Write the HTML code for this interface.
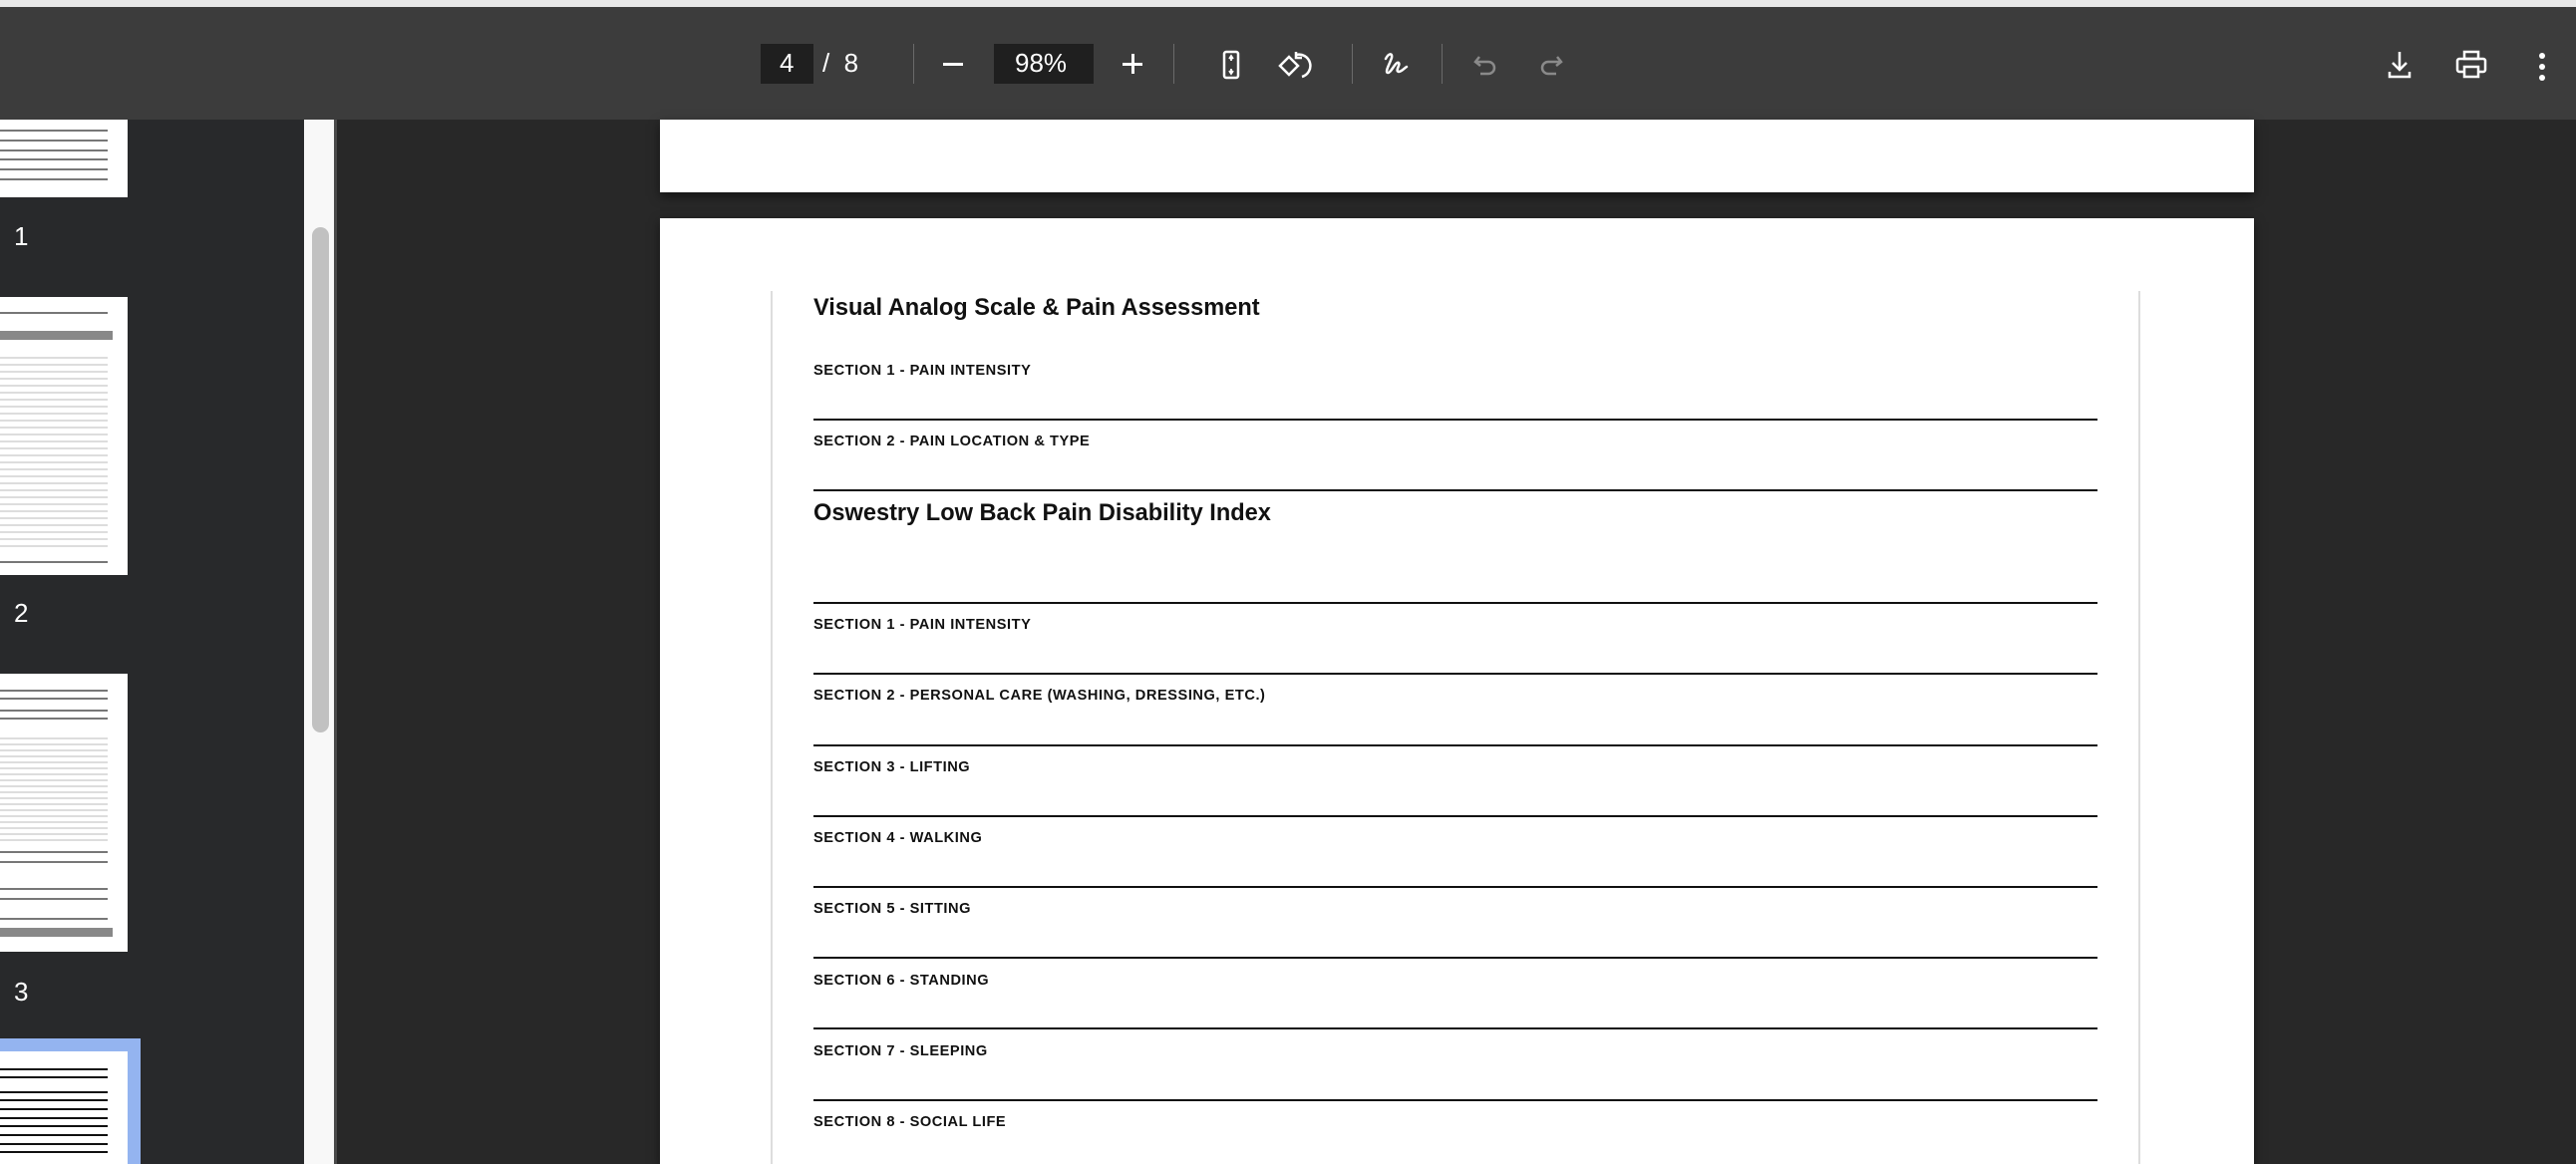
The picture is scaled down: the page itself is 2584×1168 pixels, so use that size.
<!DOCTYPE html>
<html><head><meta charset="utf-8"><style>
*{margin:0;padding:0;box-sizing:border-box}
body{width:2584px;height:1168px;overflow:hidden;background:#282828;font-family:"Liberation Sans",sans-serif;position:relative}
.abs{position:absolute}
#top{left:0;top:0;width:2584px;height:7px;background:#e8e8e8}
#tb{left:0;top:7px;width:2584px;height:113px;background:#3c3c3c}
.sep{position:absolute;top:44px;width:1px;height:40px;background:#6a6a6a}
.tbt{position:absolute;color:#fff;font-size:26px}
#side{left:0;top:120px;width:305px;height:1048px;background:#28292b;overflow:hidden}
#sb{left:305px;top:120px;width:30px;height:1048px;background:#f8f8f8}
#thumb{left:313px;top:228px;width:17px;height:507px;background:#c1c1c1;border-radius:9px}
#sl{left:335px;top:120px;width:3px;height:1048px;background:#4a4a4a}
.pg{position:absolute;background:#fff;left:662px;width:1599px;box-shadow:0 4px 10px rgba(0,0,0,.5)}
.vl{position:absolute;width:2px;background:#ddd}
.h{position:absolute;left:816px;font-size:23.6px;font-weight:bold;color:#111}
.s{position:absolute;left:816px;font-size:14.6px;font-weight:bold;color:#111;letter-spacing:.55px}
.ln{position:absolute;left:816px;width:1288px;height:2px;background:#111}
.tp{position:absolute;left:0;width:128px;background:#fff}
.tl{position:absolute;left:0;width:108px;height:2px;background:#777}
.num{position:absolute;left:14px;color:#fff;font-size:26px}
</style></head><body>
<div id="top" class="abs"></div>
<div id="tb" class="abs">
 <div class="abs" style="left:763px;top:37px;width:53px;height:40px;background:#1f1f1f"></div>
 <div class="tbt" style="left:782px;top:41px">4</div>
 <div class="tbt" style="left:825px;top:41px">/&nbsp;&nbsp;8</div>
 <div class="sep" style="left:916px;top:37px"></div>
 <div class="abs" style="left:946px;top:56px;width:20px;height:3px;background:#fff"></div>
 <div class="abs" style="left:997px;top:37px;width:100px;height:40px;background:#1f1f1f"></div>
 <div class="tbt" style="left:1018px;top:41px">98%</div>
 <div class="abs" style="left:1126px;top:56px;width:20px;height:3px;background:#fff"></div>
 <div class="abs" style="left:1135px;top:47px;width:3px;height:20px;background:#fff"></div>
 <div class="sep" style="left:1177px;top:37px"></div>
 <svg class="abs" style="left:1220px;top:42px" width="30" height="32" viewBox="0 0 30 32" fill="none" stroke="#fff" stroke-width="2.5"><rect x="8" y="3" width="14" height="26" rx="2"/><path d="M15 8v4M13 10l2-3 2 3M15 24v-4M13 22l2 3 2-3" stroke-width="1.8"/></svg>
 <svg class="abs" style="left:1280px;top:42px" width="36" height="34" viewBox="0 0 36 34" fill="none" stroke="#fff" stroke-width="2.5"><path d="M4 17l9-9 9 9-9 9z"/><path d="M20 6a10 10 0 0 1 6 22"/><path d="M20 3v6h6"/></svg>
 <div class="sep" style="left:1356px;top:37px"></div>
 <svg class="abs" style="left:1385px;top:42px" width="32" height="34" viewBox="0 0 32 34" fill="none" stroke="#fff" stroke-width="2.5" stroke-linecap="round"><path d="M5 10c3-6 7-6 6-1-2 6-7 14-4 15 3 1 8-12 11-10 2 2-4 8 0 9 3 0 6-4 8-5"/></svg>
 <div class="sep" style="left:1446px;top:37px"></div>
 <svg class="abs" style="left:1476px;top:44px" width="30" height="30" viewBox="0 0 30 30" fill="none" stroke="#8a8a8a" stroke-width="2.5"><path d="M8 6l-4 5 5 4"/><path d="M4 11h13a6 6 0 0 1 0 12H9"/></svg>
 <svg class="abs" style="left:1540px;top:44px" width="30" height="30" viewBox="0 0 30 30" fill="none" stroke="#8a8a8a" stroke-width="2.5"><path d="M22 6l4 5-5 4"/><path d="M26 11H13a6 6 0 0 0 0 12h8"/></svg>
 <svg class="abs" style="left:2392px;top:42px" width="30" height="32" viewBox="0 0 30 32" fill="none" stroke="#fff" stroke-width="2.5"><path d="M15 3v18M8 14l7 7 7-7M5 23v5h20v-5"/></svg>
 <svg class="abs" style="left:2462px;top:42px" width="34" height="32" viewBox="0 0 34 32" fill="none" stroke="#fff" stroke-width="2.5"><rect x="10" y="3" width="14" height="7"/><rect x="3" y="10" width="28" height="13" rx="2"/><rect x="10" y="18" width="14" height="10" fill="#3c3c3c"/></svg>
 <svg class="abs" style="left:2540px;top:44px" width="20" height="32" viewBox="0 0 20 32" fill="#fff"><circle cx="10" cy="5" r="3"/><circle cx="10" cy="16" r="3"/><circle cx="10" cy="27" r="3"/></svg>
</div>
<div id="side" class="abs">
 <div class="tp" style="top:0;height:78px">
  <div class="tl" style="top:10px"></div><div class="tl" style="top:20px"></div><div class="tl" style="top:30px"></div><div class="tl" style="top:39px"></div><div class="tl" style="top:49px"></div><div class="tl" style="top:59px"></div>
 </div>
 <div class="num" style="top:102px">1</div>
 <div class="tp" style="top:178px;height:279px">
  <div class="tl" style="top:15px"></div>
  <div class="abs" style="left:0;top:34px;width:113px;height:9px;background:#888"></div>
  <div class="abs" style="left:0;top:55px;width:108px;height:200px;background:repeating-linear-gradient(#fff 0 5px,#ddd 5px 7px)"></div>
  <div class="tl" style="top:265px"></div>
 </div>
 <div class="num" style="top:480px">2</div>
 <div class="tp" style="top:556px;height:279px">
  <div class="tl" style="top:16px"></div><div class="tl" style="top:24px"></div><div class="tl" style="top:36px"></div><div class="tl" style="top:44px"></div>
  <div class="abs" style="left:0;top:60px;width:108px;height:110px;background:repeating-linear-gradient(#fff 0 4px,#ddd 4px 6px)"></div>
  <div class="tl" style="top:178px"></div><div class="tl" style="top:188px"></div><div class="tl" style="top:215px"></div><div class="tl" style="top:225px"></div><div class="tl" style="top:245px"></div>
  <div class="abs" style="left:0;top:255px;width:113px;height:9px;background:#888"></div>
 </div>
 <div class="num" style="top:860px">3</div>
 <div class="abs" style="left:0;top:922px;width:141px;height:140px;background:#94b4f0"></div>
 <div class="tp" style="top:935px;height:140px">
  <div class="tl" style="top:17px;background:#111"></div><div class="tl" style="top:25px;background:#111"></div><div class="tl" style="top:40px;background:#111"></div><div class="tl" style="top:48px;background:#111"></div><div class="tl" style="top:57px;background:#111"></div><div class="tl" style="top:66px;background:#111"></div><div class="tl" style="top:74px;background:#111"></div><div class="tl" style="top:83px;background:#111"></div><div class="tl" style="top:92px;background:#111"></div><div class="tl" style="top:100px;background:#111"></div>
 </div>
</div>
<div id="sb" class="abs"></div>
<div id="thumb" class="abs"></div>
<div id="sl" class="abs"></div>
<div class="pg" style="top:120px;height:73px"></div>
<div class="pg" style="top:219px;height:949px"></div>
<div class="vl" style="left:773px;top:292px;height:876px"></div>
<div class="vl" style="left:2145px;top:292px;height:876px"></div>
<div class="h" style="top:296px">Visual Analog Scale &amp; Pain Assessment</div>
<div class="s" style="top:364px">SECTION 1 - PAIN INTENSITY</div>
<div class="ln" style="top:420px"></div>
<div class="s" style="top:435px">SECTION 2 - PAIN LOCATION &amp; TYPE</div>
<div class="ln" style="top:491px"></div>
<div class="h" style="top:502px">Oswestry Low Back Pain Disability Index</div>
<div class="ln" style="top:604px"></div>
<div class="s" style="top:619px">SECTION 1 - PAIN INTENSITY</div>
<div class="ln" style="top:675px"></div>
<div class="s" style="top:690px">SECTION 2 - PERSONAL CARE (WASHING, DRESSING, ETC.)</div>
<div class="ln" style="top:747px"></div>
<div class="s" style="top:762px">SECTION 3 - LIFTING</div>
<div class="ln" style="top:818px"></div>
<div class="s" style="top:833px">SECTION 4 - WALKING</div>
<div class="ln" style="top:889px"></div>
<div class="s" style="top:904px">SECTION 5 - SITTING</div>
<div class="ln" style="top:960px"></div>
<div class="s" style="top:976px">SECTION 6 - STANDING</div>
<div class="ln" style="top:1031px"></div>
<div class="s" style="top:1047px">SECTION 7 - SLEEPING</div>
<div class="ln" style="top:1103px"></div>
<div class="s" style="top:1118px">SECTION 8 - SOCIAL LIFE</div>
</body></html>
